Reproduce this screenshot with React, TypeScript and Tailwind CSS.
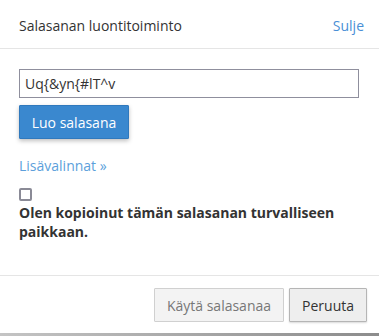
import React from 'react';

const App: React.FC = () => {
  return (
    <div className="w-[379px] h-[336px] bg-white flex flex-col font-['Open_Sans',sans-serif] text-[14px] text-[#333]">
      <div className="h-[49px] flex items-center justify-between pl-[19px] pr-[15px] pt-[2px] border-b border-[#e5e5e5]">
        <span>Salasanan luontitoiminto</span>
        <a className="text-[#4a8fd6] cursor-pointer">Sulje</a>
      </div>
      <div className="flex-1 px-[19px] pt-[20px]">
        <input
          type="text"
          readOnly
          value="Uq{&yn{#lT^v"
          className="block w-[340px] h-[29px] border border-[#8f8f9d] px-[5px] text-[14px] text-[#333] outline-none"
        />
        <button className="mt-[7px] w-[110px] h-[34px] bg-[#3a88cf] text-white rounded-[1px] shadow-[0_2px_4px_rgba(0,0,0,0.25)] border border-[#3079bd]">
          Luo salasana
        </button>
        <div className="mt-[16px] text-[#5c9fdb]">Lisävalinnat »</div>
        <div className="mt-[12px] w-[13px] h-[13px] border-2 border-[#8a8a96] rounded-[2px]" />
        <p className="mt-[2px] font-bold leading-[19px]">
          Olen kopioinut tämän salasanan turvalliseen paikkaan.
        </p>
      </div>
      <div className="h-[58px] border-t border-[#e5e5e5] flex items-start justify-end gap-[5px] pt-[12px] pr-[12px]">
        <button className="h-[34px] px-[12px] bg-[#f3f3f3] border border-[#d0d0d0] text-[#777] rounded-[1px]">
          Käytä salasanaa
        </button>
        <button className="h-[34px] px-[12px] bg-[#eeeeee] border border-[#b5b5b5] text-[#333] rounded-[1px] shadow-[0_1px_2px_rgba(0,0,0,0.15)]">
          Peruuta
        </button>
      </div>
      <div className="h-[3px] bg-gradient-to-r from-[#c4c4c4] to-[#8c8c8c]" />
    </div>
  );
};

export default App;
